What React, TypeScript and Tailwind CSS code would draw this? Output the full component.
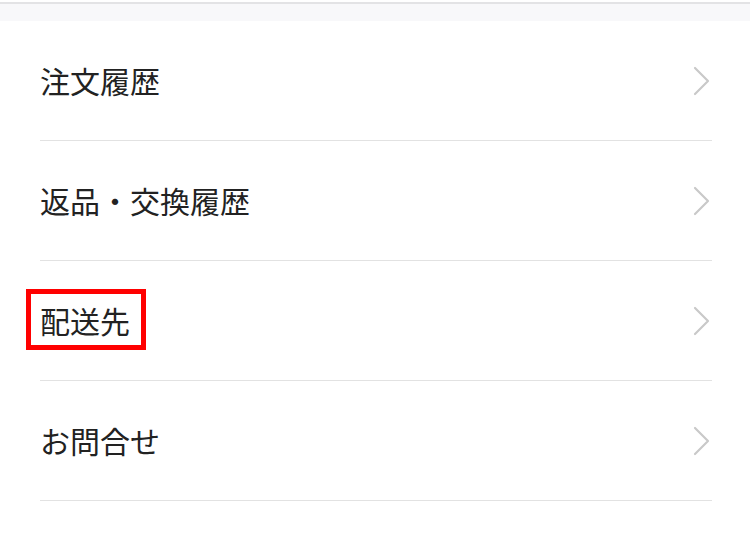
import { ReactNode } from "react"

const items = ["注文履歴", "返品・交換履歴", "配送先", "お問合せ"]

function Chevron() {
  return (
    <svg width="18" height="30" viewBox="0 0 18 30" fill="none" className="shrink-0">
      <path d="M2 2 L15 15 L2 28" stroke="#c9c9c9" strokeWidth="2.2" strokeLinecap="round" strokeLinejoin="round" />
    </svg>
  )
}

function Row({ children, highlight }: { children: ReactNode; highlight?: boolean }) {
  return (
    <div className="flex h-[120px] items-center justify-between border-b border-[#e2e2e2] pr-[1px]">
      <span className="relative -mt-[2px] text-[30px] leading-none text-[#222]">
        {children}
        {highlight && (
          <span className="absolute -left-[14px] -right-[16px] -top-[16px] -bottom-[15px] border-[5px] border-[#ff0000]" />
        )}
      </span>
      <Chevron />
    </div>
  )
}

export default function App() {
  return (
    <div className="min-h-screen bg-white" style={{ fontFamily: '"Noto Sans CJK JP", "Noto Sans", sans-serif' }}>
      {/* top strip */}
      <div className="pt-[2px]">
        <div className="h-[19px] border-t-2 border-[#e3e3e5] bg-[#f8f8fa]" />
      </div>

      {/* menu list */}
      <div className="pl-10 pr-[38px]">
        {items.map((label) => (
          <Row key={label} highlight={label === "配送先"}>
            {label}
          </Row>
        ))}
      </div>
    </div>
  )
}
